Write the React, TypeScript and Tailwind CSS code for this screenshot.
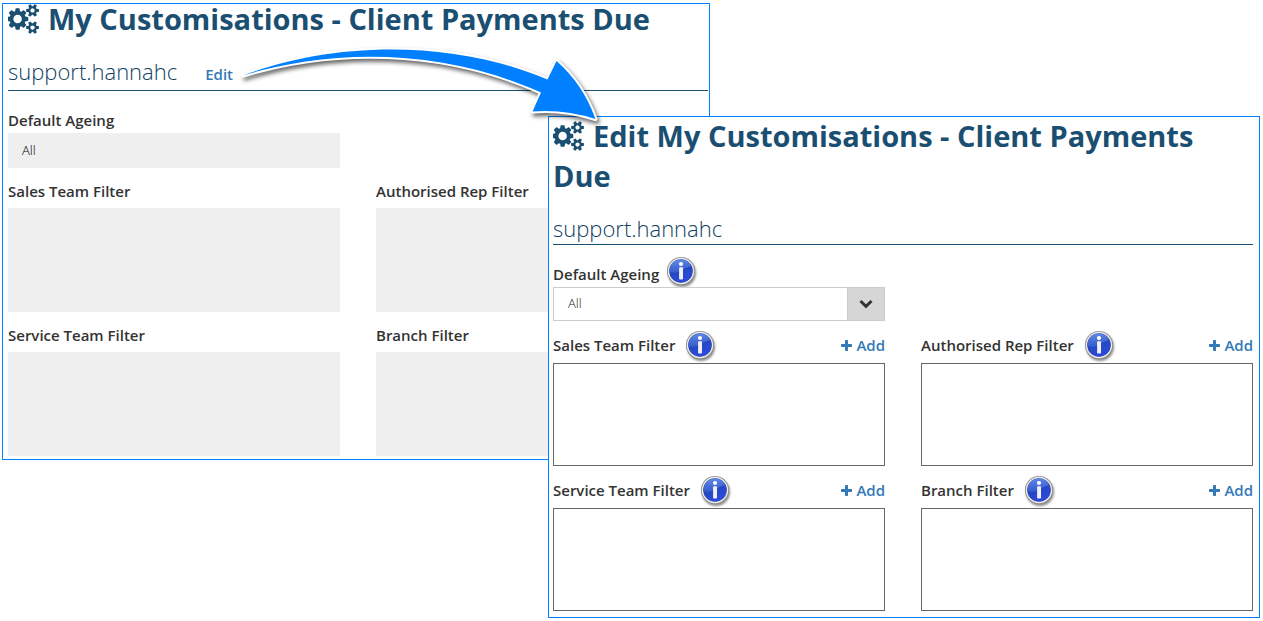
import React, { useId } from "react";

const FONT = "font-['Open_Sans','Noto_Sans',sans-serif]";

function CogsIcon() {
  return (
    <svg viewBox="0 0 1920 1792" className="mr-2 inline-block h-[30px] w-8 align-[-4px]" fill="currentColor" aria-hidden="true">
      <path d="M832 896q0-106-75-181t-181-75-181 75-75 181 75 181 181 75 181-75 75-181zm768 512q0-52-38-90t-90-38-90 38-38 90q0 53 37.5 90.5t90.5 37.5 90.5-37.5 37.5-90.5zm0-1024q0-52-38-90t-90-38-90 38-38 90q0 53 37.5 90.5t90.5 37.5 90.5-37.5 37.5-90.5zm-384 421v185q0 10-7 19.5t-16 10.5l-155 24q-11 35-32 76 34 48 90 115 7 11 7 20 0 12-7 19-23 30-82.5 89.5t-78.5 59.5q-11 0-21-7l-115-90q-37 19-77 31-11 108-23 155-7 24-30 24h-186q-11 0-20-7.5t-10-17.5l-23-153q-34-10-75-31l-118 89q-7 7-20 7-11 0-21-8-144-133-144-160 0-9 7-19 10-14 41-53t47-61q-23-44-35-82l-152-24q-10-1-17-9.5t-7-19.5v-185q0-10 7-19.5t16-10.5l155-24q11-35 32-76-34-48-90-115-7-11-7-20 0-12 7-20 22-30 82-89t79-59q11 0 21 7l115 90q34-18 77-32 11-108 23-154 7-24 30-24h186q11 0 20 7.5t10 17.5l23 153q34 10 75 31l118-89q8-7 20-7 11 0 21 8 144 133 144 160 0 8-7 19-12 16-42 54t-45 60q23 48 34 82l152 23q10 2 17 10.5t7 19.5zm640 533v140q0 16-149 31-12 27-30 52 51 113 51 138 0 4-4 7-122 71-124 71-8 0-46-47t-52-68q-20 2-30 2t-30-2q-14 21-52 68t-46 47q-2 0-124-71-4-3-4-7 0-25 51-138-18-25-30-52-149-15-149-31v-140q0-16 149-31 13-29 30-52-51-113-51-138 0-4 4-7 4-2 35-20t59-34 30-16q8 0 46 46.5t52 67.5q20-2 30-2t30 2q51-71 92-112l6-2q4 0 124 70 4 3 4 7 0 25-51 138 17 23 30 52 149 15 149 31zm0-1024v140q0 16-149 31-12 27-30 52 51 113 51 138 0 4-4 7-122 71-124 71-8 0-46-47t-52-68q-20 2-30 2t-30-2q-14 21-52 68t-46 47q-2 0-124-71-4-3-4-7 0-25 51-138-18-25-30-52-149-15-149-31v-140q0-16 149-31 13-29 30-52-51-113-51-138 0-4 4-7 4-2 35-20t59-34 30-16q8 0 46 46.5t52 67.5q20-2 30-2t30 2q51-71 92-112l6-2q4 0 124 70 4 3 4 7 0 25-51 138 17 23 30 52 149 15 149 31z" />
    </svg>
  );
}

function InfoIcon() {
  const id = useId();
  return (
    <svg viewBox="0 0 32 32" className="size-8 shrink-0 overflow-visible drop-shadow-[1px_2px_1px_rgba(0,0,0,0.45)]" role="img" aria-label="Info">
      <defs>
        <linearGradient id={`${id}f`} x1="0" y1="0" x2="0.4" y2="1">
          <stop offset="0" stopColor="#4a74dd" />
          <stop offset="0.5" stopColor="#2448bd" />
          <stop offset="1" stopColor="#2c49dc" />
        </linearGradient>
        <linearGradient id={`${id}g`} x1="0" y1="0" x2="0" y2="1">
          <stop offset="0" stopColor="#6f95ee" />
          <stop offset="1" stopColor="#3c66d6" />
        </linearGradient>
      </defs>
      <circle cx="16" cy="16" r="14" fill="#8b8b8b" />
      <circle cx="16" cy="16" r="13.2" fill="#ececec" />
      <circle cx="16" cy="16" r="11.8" fill="#2a4a9c" />
      <circle cx="16" cy="16" r="11.3" fill={`url(#${id}f)`} />
      <path d="M5 17A11 11 0 0 1 26 11Q19 13 15 16T5 17Z" fill={`url(#${id}g)`} opacity="0.7" />
      <circle cx="16" cy="9" r="2.1" fill="#fff" />
      <rect x="14.1" y="12.3" width="3.9" height="12.2" rx="0.8" fill="#f0f0f0" />
    </svg>
  );
}

function PlusIcon() {
  return (
    <svg viewBox="0 0 1408 1408" className="size-[11px]" fill="currentColor" aria-hidden="true">
      <path d="M1408 608v192q0 40-28 68t-68 28H896v416q0 40-28 68t-68 28H608q-40 0-68-28t-28-68V896H96q-40 0-68-28t-28-68V608q0-40 28-68t68-28h416V96q0-40 28-68t68-28h192q40 0 68 28t28 68v416h416q40 0 68 28t28 68z" />
    </svg>
  );
}

function Title({ children, className }: { children: React.ReactNode; className: string }) {
  return (
    <h1 className={`text-[29px] leading-10 font-bold text-[#1b4f72] ${className}`}>
      <CogsIcon />
      {children}
    </h1>
  );
}

function ReadOnlyField({ label }: { label: string }) {
  return (
    <section>
      <h3 className="flex h-10 items-center pt-1.5 text-[15px] font-semibold">{label}</h3>
      <div className="h-[104px] bg-[#efefef]" />
    </section>
  );
}

function EditableField({ label }: { label: string }) {
  return (
    <section>
      <div className="flex h-[42px] items-center justify-between pt-1.5">
        <div className="flex items-center gap-[9px]">
          <h3 className="text-[15px] font-semibold">{label}</h3>
          <InfoIcon />
        </div>
        <button type="button" className="flex items-center gap-1 text-[15px] font-semibold text-[#337ab7]">
          <PlusIcon />
          Add
        </button>
      </div>
      <div className="h-[103px] border border-[#666]" />
    </section>
  );
}

function ViewPanel() {
  return (
    <main className="col-span-2 col-start-1 row-span-2 row-start-1 border border-[#0080ff] bg-white pr-px pl-[5px]">
      <Title className="-mt-[5px]">My Customisations - Client Payments Due</Title>
      <div className="mt-3.5 flex h-[38px] items-center gap-7 border-b border-[#1b4f72]">
        <h2 className="text-[22px] font-light text-[#113f60]">support.hannahc</h2>
        <a href="#edit" className="pt-1.5 text-[15px] font-semibold text-[#337ab7]">Edit</a>
      </div>
      <div className="grid grid-cols-2 gap-x-9">
        <section className="col-start-1">
          <h3 className="flex h-[42px] items-end pb-0.5 text-[15px] font-semibold">Default Ageing</h3>
          <p className="flex h-[35px] items-center bg-[#efefef] pl-3.5 text-[13px] font-light text-black">All</p>
        </section>
        <div />
        <ReadOnlyField label="Sales Team Filter" />
        <ReadOnlyField label="Authorised Rep Filter" />
        <ReadOnlyField label="Service Team Filter" />
        <ReadOnlyField label="Branch Filter" />
      </div>
    </main>
  );
}

function EditPanel() {
  return (
    <section className="col-span-2 col-start-2 row-span-2 row-start-2 border border-[#0080ff] bg-white pr-1.5 pb-1.5 pl-1">
      <Title className="-mt-px">Edit My Customisations - Client Payments Due</Title>
      <div className="mt-4 flex h-[33px] items-center border-b border-[#1b4f72]">
        <h2 className="text-[22px] font-light text-[#113f60]">support.hannahc</h2>
      </div>
      <div className="grid grid-cols-2 gap-x-9">
        <section>
          <div className="flex h-[42px] items-center gap-1.5 pt-2.5">
            <label htmlFor="ageing" className="pt-1.5 text-[15px] font-semibold">Default Ageing</label>
            <InfoIcon />
          </div>
          <div className="relative">
            <select id="ageing" className="block h-[34px] w-full appearance-none border border-[#ccc] bg-white pl-3.5 text-[13px] font-light text-[#222]">
              <option>All</option>
            </select>
            <span className="pointer-events-none absolute inset-y-0 right-0 flex w-[38px] items-center justify-center border border-[#ccc] bg-[#d6d6d6]">
              <svg viewBox="0 0 14 10" className="h-2.5 w-3.5" fill="none" stroke="#333" strokeWidth="3" aria-hidden="true">
                <path d="M1.5 2 7 7.3 12.5 2" />
              </svg>
            </span>
          </div>
        </section>
        <div />
        <EditableField label="Sales Team Filter" />
        <EditableField label="Authorised Rep Filter" />
        <EditableField label="Service Team Filter" />
        <EditableField label="Branch Filter" />
      </div>
    </section>
  );
}

export default function App() {
  return (
    <div className={`relative grid grid-cols-[546fr_162fr_550fr] grid-rows-[113px_344px_auto] bg-white pt-[3px] pr-[3px] pl-0.5 text-[#333] ${FONT}`}>
      <ViewPanel />
      <EditPanel />
      <svg
        viewBox="236 40 370 90"
        className="pointer-events-none absolute top-10 left-[236px] h-[90px] w-[370px] overflow-visible drop-shadow-[2px_3px_2px_rgba(0,0,0,0.6)]"
        aria-hidden="true"
      >
        <path
          d="M243 75.500C330 42 450 38 547.500 79.500L556.500 61Q583 84 595.500 119Q564 109 532.500 111.500L541 92.500C440 47 330 49 243 75.500Z"
          fill="#0080ff"
          stroke="#fff"
          strokeWidth="4"
          strokeLinejoin="round"
          paintOrder="stroke"
        />
      </svg>
    </div>
  );
}
